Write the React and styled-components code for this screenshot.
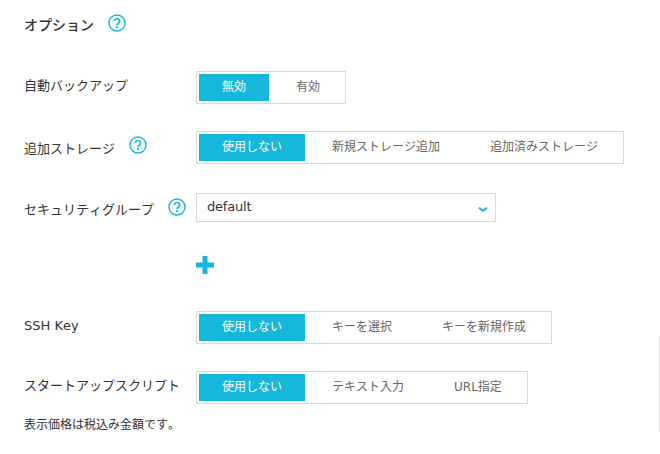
import React from "react";
import styled, { createGlobalStyle } from "styled-components";

const GlobalStyle = createGlobalStyle`
  html, body {
    margin: 0;
    padding: 0;
    background: #fff;
  }
  body {
    font-family: "DejaVu Sans", "Noto Sans CJK JP", sans-serif;
    font-kerning: none;
    color: #333;
  }
`;

function HelpIcon({ lift = 0 }) {
  return (
    <HelpSvg viewBox="0 0 18 18" aria-hidden="true" $lift={lift}>
      <circle cx="9" cy="9" r="8" fill="none" stroke="#15b8da" strokeWidth="1.4" />
      <path d="M6.4 7.1a2.6 2.6 0 1 1 4 2.2c-.9.6-1.4 1-1.4 2" fill="none" stroke="#15b8da" strokeWidth="1.7" />
      <rect x="8.05" y="12.2" width="1.9" height="1.9" fill="#15b8da" />
    </HelpSvg>
  );
}

function Segments({ items }) {
  return (
    <SegmentBox>
      {items.map((item, i) => (
        <Segment key={item} $active={i === 0}>
          {item}
        </Segment>
      ))}
    </SegmentBox>
  );
}

function App() {
  return (
    <Page>
      <GlobalStyle />
      <Heading>
        <HeadingText>オプション</HeadingText>
        <HelpIcon />
      </Heading>

      <Row $top={39}>
        <Label $lift={2}>自動バックアップ</Label>
        <Segments items={["無効", "有効"]} />
      </Row>

      <Row $top={27}>
        <Label $lift={-1}>
          追加ストレージ
          <HelpIcon lift={4} />
        </Label>
        <Segments items={["使用しない", "新規ストレージ追加", "追加済みストレージ"]} />
      </Row>

      <Row $top={27}>
        <Label $lift={-2}>
          セキュリティグループ
          <HelpIcon lift={3} />
        </Label>
        <SelectBox>
          <SelectValue>default</SelectValue>
          <Chevron width="10" height="5" viewBox="0 0 10 5" aria-hidden="true">
            <path d="M1 .8 5 3.8 9 .8" fill="none" stroke="#15b8da" strokeWidth="2" />
          </Chevron>
        </SelectBox>
      </Row>

      <AddRow>
        <svg width="18" height="18" viewBox="0 0 18 18" aria-hidden="true">
          <path d="M6.5 0h5v6.5H18v5h-6.5V18h-5v-6.5H0v-5h6.5z" fill="#15b8da" />
        </svg>
      </AddRow>

      <Row $top={37}>
        <Label $lift={2}>SSH Key</Label>
        <Segments items={["使用しない", "キーを選択", "キーを新規作成"]} />
      </Row>

      <Row $top={27}>
        <Label $lift={2}>スタートアップスクリプト</Label>
        <Segments items={["使用しない", "テキスト入力", "URL指定"]} />
      </Row>

      <Note>表示価格は税込み金額です。</Note>
      <ScrollEdge />
    </Page>
  );
}

export default App;

const Page = styled.div`
  position: relative;
  width: 660px;
  height: 454px;
  overflow: hidden;
  padding: 14px 0 0 24px;
  box-sizing: border-box;
`;

const Heading = styled.div`
  display: flex;
  align-items: center;
  gap: 14px;
  height: 18px;
`;

const HeadingText = styled.h2`
  margin: 0;
  padding-top: 4px;
  font-size: 14px;
  font-weight: 500;
  line-height: 18px;
  color: #333;
`;

const HelpSvg = styled.svg`
  width: 18px;
  height: 18px;
  flex: none;
  transform: translateY(${(p) => -p.$lift}px);
`;

const Row = styled.div`
  display: flex;
  align-items: center;
  margin-top: ${(p) => p.$top}px;
  min-height: 33px;
`;

const Label = styled.div`
  display: flex;
  align-items: center;
  gap: 14px;
  width: 172px;
  flex: none;
  font-size: 13px;
  line-height: 20px;
  color: #333;
  white-space: nowrap;
  transform: translateY(${(p) => -p.$lift}px);
`;

const SegmentBox = styled.div`
  display: flex;
  gap: 4px;
  padding: 2px;
  border: 1px solid #d9d9d9;
`;

const Segment = styled.div`
  height: 27px;
  padding: 0 23px;
  font-size: 12px;
  line-height: 27px;
  white-space: nowrap;
  background: ${(p) => (p.$active ? "#15b8da" : "#fff")};
  color: ${(p) => (p.$active ? "#fff" : "#666")};
`;

const SelectBox = styled.div`
  display: flex;
  align-items: center;
  justify-content: space-between;
  box-sizing: border-box;
  width: 300px;
  height: 29px;
  padding: 0 7px 0 10px;
  border: 1px solid #d9d9d9;
  font-size: 13px;
  color: #333;
`;

const SelectValue = styled.span`
  padding-bottom: 2px;
  letter-spacing: -0.2px;
`;

const Chevron = styled.svg`
  margin-top: 3px;
`;

const AddRow = styled.div`
  display: flex;
  margin: 32px 0 0 172px;
  height: 18px;
`;

const Note = styled.p`
  margin: 12px 0 0;
  font-size: 12px;
  line-height: 18px;
  color: #333;
`;

const ScrollEdge = styled.div`
  position: absolute;
  right: 0;
  top: 336px;
  height: 96px;
  width: 1.5px;
  background: #e2e2e2;
`;
